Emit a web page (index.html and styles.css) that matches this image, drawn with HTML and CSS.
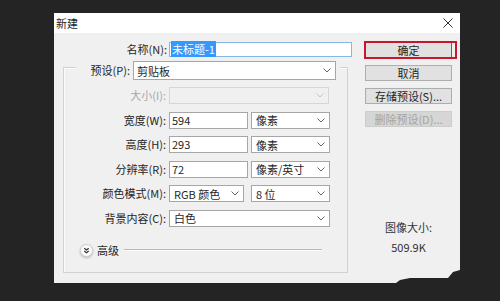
FILE: index.html
```html
<!DOCTYPE html>
<html lang="zh">
<head>
<meta charset="utf-8">
<link rel="stylesheet" href="styles.css">
</head>
<body>
<div class="dialog">
  <div class="titlebar">
    <span class="title">新建</span>
    <svg class="close" width="10" height="10" viewBox="0 0 10 10"><path d="M0.5 0.5 L9.5 9.5 M9.5 0.5 L0.5 9.5" stroke="#333" stroke-width="1" fill="none"/></svg>
  </div>
  <div class="content">
    <div class="form">
      <div class="name-row">
        <span class="label name-label">名称(N):</span>
        <div class="input name-input"><span class="sel">未标题-1</span></div>
      </div>
      <div class="group">
        <div class="preset-row">
          <span class="label preset-label">预设(P):</span>
          <div class="select preset-select"><span>剪贴板</span><svg class="arrow" width="8" height="5" viewBox="0 0 8 5"><path d="M0.5 0.5 L4 4 L7.5 0.5" stroke="#666" fill="none"/></svg></div>
        </div>
        <div class="rows">
          <div class="row">
            <span class="label disabled">大小(I):</span>
            <div class="select size-select dis"><span></span><svg class="arrow" width="8" height="5" viewBox="0 0 8 5"><path d="M0.5 0.5 L4 4 L7.5 0.5" stroke="#c4c4c4" fill="none"/></svg></div>
          </div>
          <div class="row">
            <span class="label">宽度(W):</span>
            <div class="input num">594</div>
            <div class="select unit"><span>像素</span><svg class="arrow" width="8" height="5" viewBox="0 0 8 5"><path d="M0.5 0.5 L4 4 L7.5 0.5" stroke="#666" fill="none"/></svg></div>
          </div>
          <div class="row">
            <span class="label">高度(H):</span>
            <div class="input num">293</div>
            <div class="select unit"><span>像素</span><svg class="arrow" width="8" height="5" viewBox="0 0 8 5"><path d="M0.5 0.5 L4 4 L7.5 0.5" stroke="#666" fill="none"/></svg></div>
          </div>
          <div class="row">
            <span class="label">分辨率(R):</span>
            <div class="input num">72</div>
            <div class="select unit"><span>像素/英寸</span><svg class="arrow" width="8" height="5" viewBox="0 0 8 5"><path d="M0.5 0.5 L4 4 L7.5 0.5" stroke="#666" fill="none"/></svg></div>
          </div>
          <div class="row">
            <span class="label">颜色模式(M):</span>
            <div class="select mode"><span>RGB 颜色</span><svg class="arrow" width="8" height="5" viewBox="0 0 8 5"><path d="M0.5 0.5 L4 4 L7.5 0.5" stroke="#666" fill="none"/></svg></div>
            <div class="select unit bits"><span>8 位</span><svg class="arrow" width="8" height="5" viewBox="0 0 8 5"><path d="M0.5 0.5 L4 4 L7.5 0.5" stroke="#666" fill="none"/></svg></div>
          </div>
          <div class="row">
            <span class="label">背景内容(C):</span>
            <div class="select bg-select"><span>白色</span><svg class="arrow" width="8" height="5" viewBox="0 0 8 5"><path d="M0.5 0.5 L4 4 L7.5 0.5" stroke="#666" fill="none"/></svg></div>
          </div>
        </div>
        <div class="advanced">
          <svg class="adv-icon" width="13" height="13" viewBox="0 0 13 13"><circle cx="6.5" cy="6.5" r="6" fill="#fafafa" stroke="#cfcfcf"/><path d="M4.3 4.3 L6.5 6 L8.7 4.3 M4.3 7 L6.5 8.7 L8.7 7" stroke="#333" stroke-width="1.2" fill="none"/></svg>
          <span class="adv-text">高级</span>
          <span class="adv-line"></span>
        </div>
      </div>
    </div>
    <div class="side">
      <div class="ok-wrap">
        <div class="btn ok">确定</div>
        <span class="mark"></span>
      </div>
      <div class="btn">取消</div>
      <div class="btn">存储预设(S)...</div>
      <div class="btn off">删除预设(D)...</div>
      <div class="info">
        <div>图像大小:</div>
        <div>509.9K</div>
      </div>
    </div>
  </div>
  <svg class="smudge" width="64" height="14" viewBox="0 0 64 14"><path d="M0 14 L4 11 L14 9 L52 9 L57 3 L64 1 L64 14 Z" fill="#242424"/></svg>
</div>
</body>
</html>
```

FILE: styles.css
```css
html, body {
  margin: 0;
  padding: 0;
}
body {
  background: #242424;
  width: 500px;
  height: 301px;
  overflow: hidden;
  font-family: "Noto Sans CJK SC", "Noto Sans", sans-serif;
  font-size: 11px;
  color: #262626;
}
.dialog {
  position: relative;
  margin: 13px 0 0 54px;
  width: 406px;
  height: 270px;
  background: #f0f0f0;
  display: flex;
  flex-direction: column;
}
.titlebar {
  height: 20px;
  background: #fff;
  display: flex;
  align-items: center;
  justify-content: space-between;
  padding: 0 7px 0 2px;
  flex: none;
}
.title {
  font-size: 11px;
  line-height: 20px;
}
.content {
  display: flex;
  padding-top: 9px;
}
.form {
  width: 298px;
  display: flex;
  flex-direction: column;
}
.label {
  text-align: right;
  white-space: nowrap;
  line-height: 17px;
}
.label.disabled {
  color: #a8a8a8;
}
.name-row {
  display: flex;
  align-items: center;
  height: 15px;
  gap: 2px;
}
.name-label {
  width: 113px;
  flex: none;
}
.input {
  box-sizing: border-box;
  background: #fff;
  border: 1px solid #a6a6a6;
  height: 17px;
  line-height: 15px;
  padding-left: 2px;
  white-space: nowrap;
}
.name-input {
  width: 183px;
  height: 15px;
  line-height: 13px;
  border-color: #86b6e4;
  padding-left: 1px;
}
.sel {
  background: #3399ff;
  color: #fff;
  padding: 0 1px;
}
.group {
  box-sizing: border-box;
  margin: 10px 0 0 9px;
  width: 285px;
  height: 206px;
  border: 1px solid #d2d2d2;
  box-shadow: inset 1px 1px 0 #fbfbfb;
  display: flex;
  flex-direction: column;
}
.preset-row {
  display: flex;
  align-items: center;
  gap: 3px;
  margin: -7px 0 0 12px;
  width: 264px;
  height: 19px;
  padding-right: 4px;
  box-sizing: border-box;
  background: #f0f0f0;
}
.preset-label {
  width: 54px;
  flex: none;
}
.select {
  box-sizing: border-box;
  display: flex;
  align-items: center;
  justify-content: space-between;
  background: #fff;
  border: 1px solid #a6a6a6;
  height: 17px;
  padding: 0 4px 0 4px;
  white-space: nowrap;
  flex: none;
}
.preset-select {
  width: 203px;
  height: 19px;
  padding-left: 3px;
}
.arrow {
  display: block;
  flex: none;
}
.rows {
  margin-top: 7px;
  display: grid;
  row-gap: 7.5px;
}
.row {
  display: flex;
  align-items: center;
  height: 17px;
}
.row > .label {
  width: 102px;
  flex: none;
  margin-right: 3px;
}
.size-select {
  width: 160px;
}
.select.dis {
  background: #f0f0f0;
  border-color: #d6d6d6;
}
.num {
  width: 79px;
  flex: none;
}
.unit {
  width: 79px;
  margin-left: 3px;
}
.mode {
  width: 75px;
}
.bits {
  margin-left: 7px;
}
.bg-select {
  width: 161px;
}
.advanced {
  display: flex;
  align-items: center;
  height: 13px;
  margin: 17px 25px 0 16px;
}
.adv-icon {
  display: block;
  flex: none;
  filter: drop-shadow(0 1px 1px rgba(0, 0, 0, 0.25));
}
.adv-text {
  margin-left: 4px;
  line-height: 13px;
}
.adv-line {
  flex: 1;
  margin-left: 5px;
  height: 0;
  border-top: 1px solid #b9b9b9;
  border-bottom: 1px solid #fbfbfb;
}
.side {
  margin-left: 13px;
  width: 87px;
  display: flex;
  flex-direction: column;
  gap: 7px;
}
.ok-wrap {
  position: relative;
}
.btn {
  box-sizing: border-box;
  height: 16px;
  line-height: 14px;
  text-align: center;
  background: #e1e1e1;
  border: 1px solid #adadad;
  white-space: nowrap;
}
.btn.ok {
  border-color: #1a78d0;
}
.btn.off {
  background: #d6d6d6;
  border-color: #cdcdcd;
  color: #a3a3a3;
}
.mark {
  position: absolute;
  left: -1px;
  top: -1px;
  width: 93px;
  height: 18px;
  box-sizing: border-box;
  border: 2px solid #c8162a;
}
.info {
  margin-top: 83px;
  text-align: center;
  line-height: 20px;
  color: #333;
}
.smudge {
  position: absolute;
  right: 0;
  bottom: 0;
  display: block;
}
```
